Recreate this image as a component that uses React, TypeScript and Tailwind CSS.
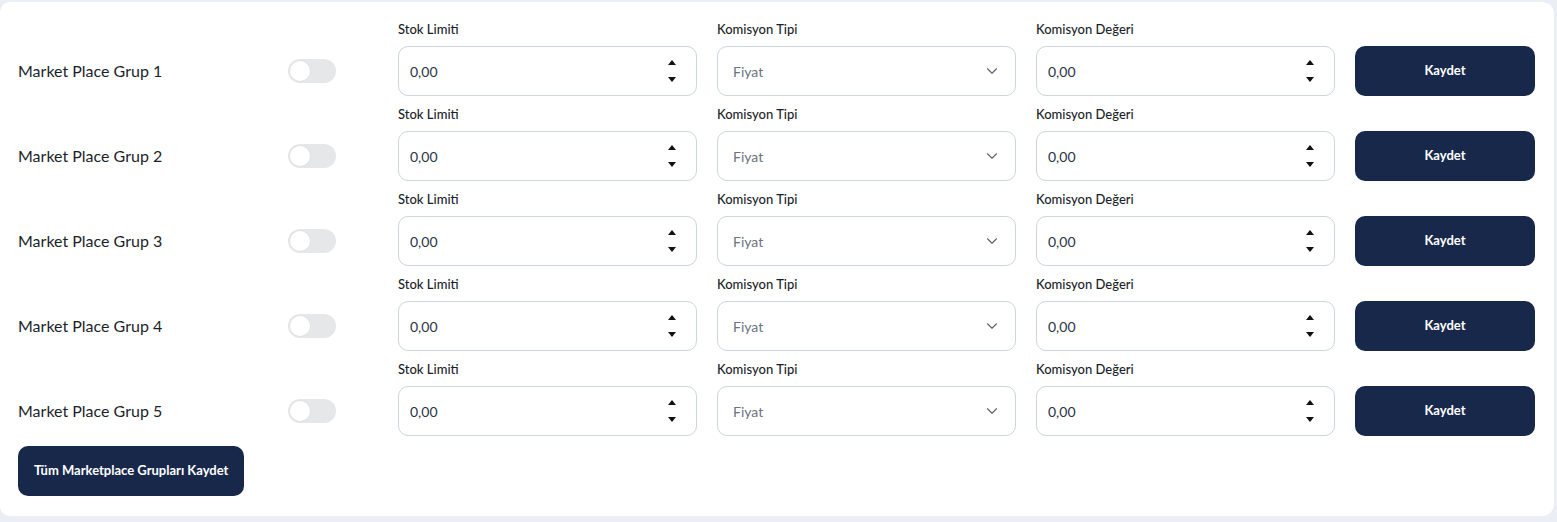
import { ChevronDown } from "lucide-react";

const groups = [1, 2, 3, 4, 5];

function Spinner() {
  return (
    <div className="flex flex-col items-center justify-between h-[22px]">
      <svg width="8" height="5" viewBox="0 0 8 5">
        <polygon points="4,0 8,5 0,5" fill="#111" />
      </svg>
      <svg width="8" height="5" viewBox="0 0 8 5">
        <polygon points="0,0 8,0 4,5" fill="#111" />
      </svg>
    </div>
  );
}

function NumberField({ label }: { label: string }) {
  return (
    <div className="flex flex-col w-[299px]">
      <span className="text-[13px] leading-[21px] font-medium text-[#1b1f2a]">{label}</span>
      <div className="mt-[6px] h-[50px] rounded-[10px] border border-[#cdd5df] bg-white flex items-center justify-between pl-[11px] pr-[20px]">
        <span className="text-[14px] text-[#2b3445]">0,00</span>
        <Spinner />
      </div>
    </div>
  );
}

function SelectField() {
  return (
    <div className="flex flex-col w-[299px]">
      <span className="text-[13px] leading-[21px] font-medium text-[#1b1f2a]">Komisyon Tipi</span>
      <div className="mt-[6px] h-[50px] rounded-[10px] border border-[#cdd5df] bg-white flex items-center justify-between pl-[15px] pr-[14px]">
        <span className="text-[14px] text-[#6b7280]">Fiyat</span>
        <ChevronDown size={18} strokeWidth={1.5} className="text-[#5b6472]" />
      </div>
    </div>
  );
}

function Toggle() {
  return (
    <div className="w-[48px] h-[24px] rounded-full bg-[#e6e7e9] flex items-center px-[2px]">
      <div className="w-[20px] h-[20px] rounded-full bg-white shadow-[0_0_0_1px_#e2e3e5]" />
    </div>
  );
}

function GroupRow({ n }: { n: number }) {
  return (
    <div className="flex items-end">
      <div className="w-[270px] h-[50px] flex items-center text-[16px] text-[#1b1f2a]">
        Market Place Grup {n}
      </div>
      <div className="w-[110px] h-[50px] flex items-center">
        <Toggle />
      </div>
      <div className="flex items-end gap-[20px]">
        <NumberField label="Stok Limiti" />
        <SelectField />
        <NumberField label="Komisyon Değeri" />
        <button className="w-[180px] h-[50px] rounded-[10px] bg-[#18284b] text-white text-[13px] font-bold">
          Kaydet
        </button>
      </div>
    </div>
  );
}

export default function App() {
  return (
    <div className="min-h-screen bg-[#ebeef5] pt-[2px] pr-[3px] font-['Lato',sans-serif]">
      <div className="bg-white rounded-r-[12px] rounded-l-[10px] pl-[18px] pr-[19px] pt-[17px] pb-[20px] flex flex-col">
        <div className="flex flex-col gap-[8px]">
          {groups.map((n) => (
            <GroupRow key={n} n={n} />
          ))}
        </div>
        <div className="mt-[10px]">
          <button className="h-[50px] px-[16px] rounded-[10px] bg-[#18284b] text-white text-[13px] font-bold">
            Tüm Marketplace Grupları Kaydet
          </button>
        </div>
      </div>
    </div>
  );
}
